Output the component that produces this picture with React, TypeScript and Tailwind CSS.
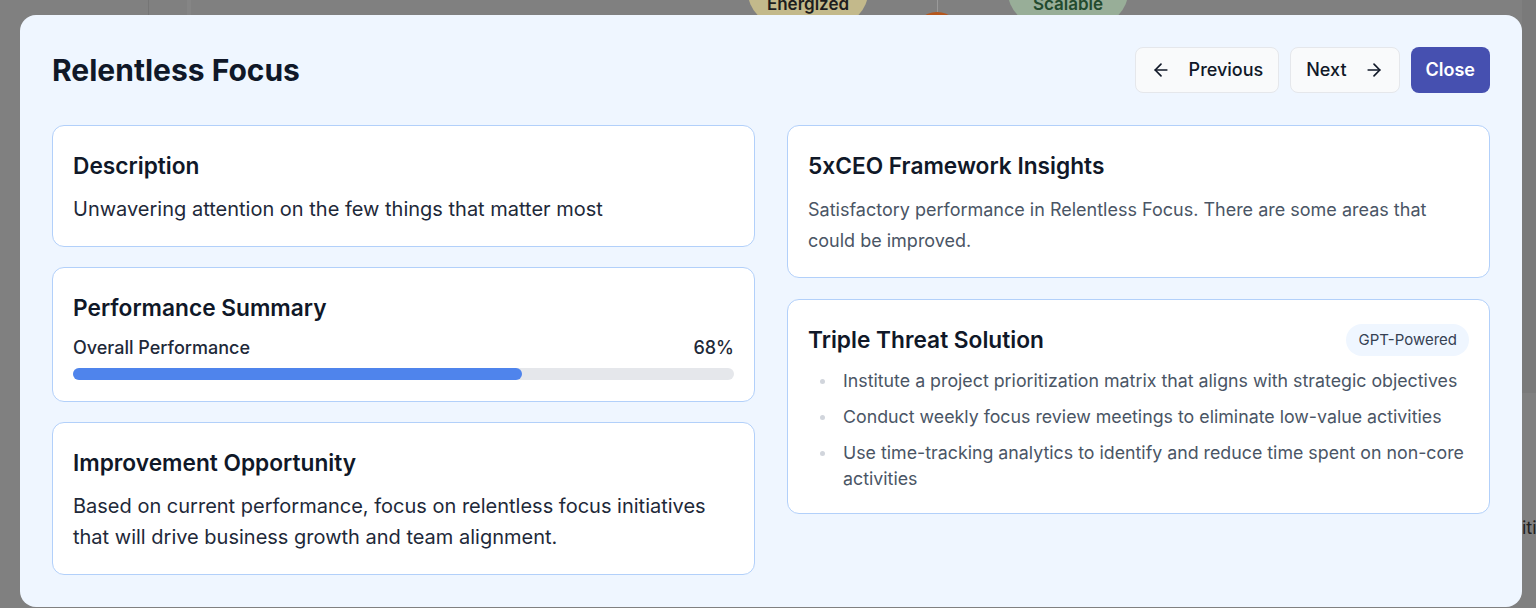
import { ArrowLeft, ArrowRight } from 'lucide-react'

const solutions = [
  'Institute a project prioritization matrix that aligns with strategic objectives',
  'Conduct weekly focus review meetings to eliminate low-value activities',
  'Use time-tracking analytics to identify and reduce time spent on non-core activities',
]

function Card({ children }: { children: React.ReactNode }) {
  return <div className="rounded-xl border border-[#b2d0fa] bg-white px-5 pt-6 pb-[21px]">{children}</div>
}

function CardTitle({ children }: { children: React.ReactNode }) {
  return <h3 className="text-[22.7px] font-semibold leading-8 text-gray-900">{children}</h3>
}

function Backdrop() {
  // dimmed page behind the dialog
  return (
    <div className="absolute inset-0 bg-[#808080]">
      <div className="absolute left-[148px] top-0 h-[20px] w-px bg-[#757575]" />
      <div className="absolute left-[187px] top-0 h-[20px] w-[4px] bg-[#858585]" />
      <div className="absolute left-[748px] top-[-40px] flex h-[64px] w-[120px] items-end justify-center rounded-full bg-[#c3b98b] pb-[11px]">
        <span className="text-[17px] font-semibold leading-none text-[#1d1d1d]">Energized</span>
      </div>
      <div className="absolute left-[937px] top-0 h-[14px] w-px bg-[#9a9a9a]" />
      <div className="absolute left-[913px] top-[12px] h-[48px] w-[48px] rounded-full bg-[#b5561c]" />
      <div className="absolute left-[1008px] top-[-40px] flex h-[64px] w-[120px] items-end justify-center rounded-full bg-[#98ae98] pb-[11px]">
        <span className="text-[17px] font-semibold leading-none text-[#224a2e]">Scalable</span>
      </div>
      <div className="absolute left-[1522px] top-0 h-[393px] w-[14px] bg-[#7a7a7a]" />
      <span className="absolute left-[1522px] top-[516px] text-lg leading-6 text-[#222]">itiatives</span>
    </div>
  )
}

export default function App() {
  return (
    <div className="relative h-[608px] w-full overflow-hidden bg-white font-['Inter',sans-serif]">
      <Backdrop />
      <div className="absolute left-[20px] top-[15px] w-[1502px] rounded-2xl bg-[#eff6ff] p-8">
        <div className="mb-8 flex items-center justify-between">
          <h2 className="text-3xl font-bold text-gray-900">Relentless Focus</h2>
          <div className="flex items-center gap-[11px]">
            <button className="flex items-center gap-[18px] rounded-lg border border-gray-200 bg-gray-50 px-[15px] py-2 text-lg font-medium text-gray-900">
              <ArrowLeft className="h-5 w-5" strokeWidth={2} />
              Previous
            </button>
            <button className="flex items-center gap-[17px] rounded-lg border border-gray-200 bg-gray-50 px-[15px] py-2 text-lg font-medium text-gray-900">
              Next
              <ArrowRight className="h-5 w-5" strokeWidth={2} />
            </button>
            <button className="rounded-lg border border-transparent bg-[#4650b0] px-[14px] py-2 text-lg font-semibold text-white">
              Close
            </button>
          </div>
        </div>

        <div className="grid grid-cols-2 items-start gap-8">
          <div className="flex flex-col gap-5">
            <Card>
              <CardTitle>Description</CardTitle>
              <p className="mt-3 text-xl leading-[31px] text-gray-800">
                Unwavering attention on the few things that matter most
              </p>
            </Card>
            <Card>
              <CardTitle>Performance Summary</CardTitle>
              <div className="mt-3 mb-2 flex items-center justify-between text-lg leading-6 font-medium text-gray-800">
                <span>Overall Performance</span>
                <span>68%</span>
              </div>
              <div className="h-3 w-full rounded-full bg-gray-200">
                <div className="h-3 rounded-full bg-[#4f84ec]" style={{ width: '68%' }} />
              </div>
            </Card>
            <Card>
              <CardTitle>Improvement Opportunity</CardTitle>
              <p className="mt-3 text-xl leading-[31px] text-gray-800">
                Based on current performance, focus on relentless focus initiatives that will drive business growth and
                team alignment.
              </p>
            </Card>
          </div>

          <div className="flex flex-col gap-[21px]">
            <Card>
              <CardTitle>5xCEO Framework Insights</CardTitle>
              <p className="mt-3 text-lg leading-[31px] text-gray-600">
                Satisfactory performance in Relentless Focus. There are some areas that could be improved.
              </p>
            </Card>
            <Card>
              <div className="flex items-center justify-between">
                <CardTitle>Triple Threat Solution</CardTitle>
                <span className="rounded-full bg-blue-50 px-3 py-1 text-[15px] leading-6 text-gray-700">GPT-Powered</span>
              </div>
              <ul className="mt-3 flex flex-col gap-2.5">
                {solutions.map((s) => (
                  <li key={s} className="flex text-[17.8px] leading-[26px] text-gray-600">
                    <span className="mt-[11px] mr-[18px] ml-3 h-[5px] w-[5px] shrink-0 rounded-full bg-gray-300" />
                    <span>{s}</span>
                  </li>
                ))}
              </ul>
            </Card>
          </div>
        </div>
      </div>
    </div>
  )
}
